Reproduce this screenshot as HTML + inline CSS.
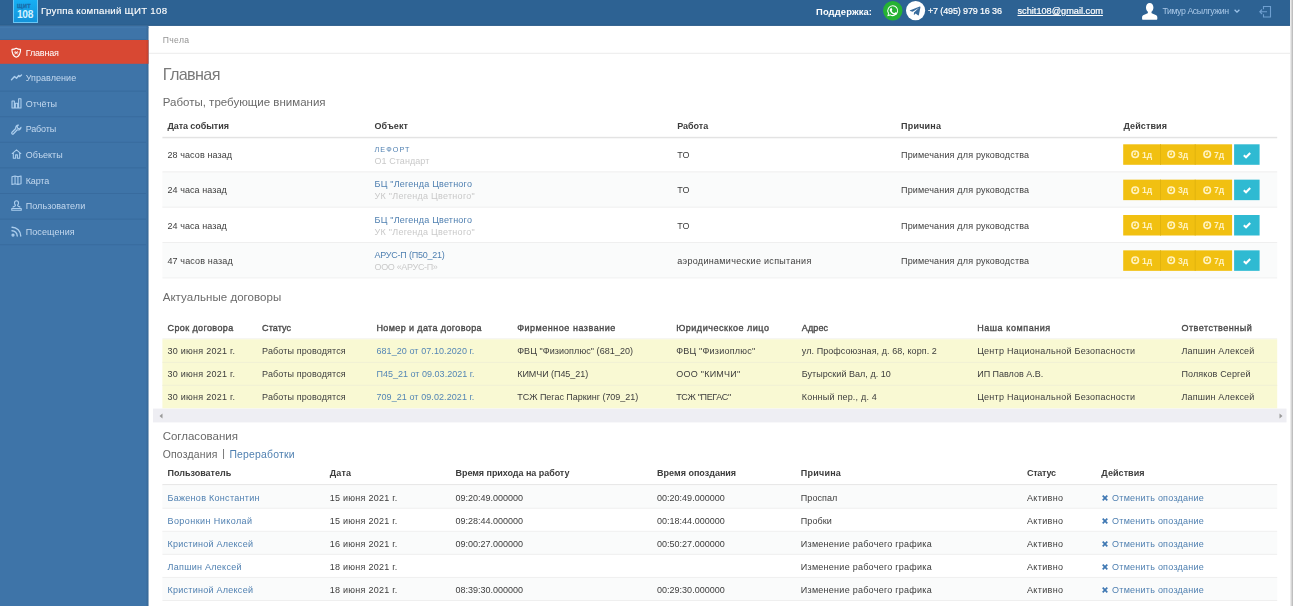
<!DOCTYPE html>
<html lang="ru">
<head>
<meta charset="utf-8">
<title>Главная</title>
<style>
*{box-sizing:border-box;margin:0;padding:0}
html,body{width:1293px;height:606px;overflow:hidden;background:#fff}
body{font-family:"Liberation Sans",sans-serif;font-size:9px;color:#3d3d3d;position:relative}
#frame{position:absolute;left:0;top:0;width:1290px;height:606px;overflow:hidden;background:#fff}
#edge{position:absolute;left:1290px;top:0;width:3px;height:606px;background:linear-gradient(90deg,#f4f4f4 0,#d6d6d6 50%,#b4b4b4 100%)}
.t{position:absolute;white-space:pre}
#tx{position:absolute;left:0;top:0;width:1290px;height:606px;will-change:transform}
.b{position:absolute}
svg{position:absolute;overflow:visible}
</style>
</head>
<body>
<div id="frame">
<svg style="left:0;top:0" width="1290" height="606" viewBox="0 0 1290 606">
<rect x="0.00" y="0.00" width="1290.00" height="25.75" fill="#2d6293"/>
<rect x="0.00" y="24.75" width="1290.00" height="1.00" fill="#2b5b89"/>
<rect x="0.00" y="25.75" width="148.50" height="581.00" fill="#3e74a8"/>
<rect x="0.00" y="27.20" width="148.50" height="1.00" fill="#457bad"/>
<rect x="0.00" y="40.00" width="148.50" height="23.80" fill="#d84833"/>
<defs><linearGradient id="sg" x1="0" x2="1" y1="0" y2="0"><stop offset="0" stop-color="#000" stop-opacity="0"/><stop offset="1" stop-color="#000" stop-opacity=".11"/></linearGradient></defs>
<rect x="145.50" y="25.75" width="3.00" height="581.00" fill="url(#sg)"/>
<rect x="0.00" y="90.60" width="146.00" height="1.00" fill="#386b9e"/>
<rect x="0.00" y="116.20" width="146.00" height="1.00" fill="#386b9e"/>
<rect x="0.00" y="141.80" width="146.00" height="1.00" fill="#386b9e"/>
<rect x="0.00" y="167.40" width="146.00" height="1.00" fill="#386b9e"/>
<rect x="0.00" y="193.00" width="146.00" height="1.00" fill="#386b9e"/>
<rect x="0.00" y="218.60" width="146.00" height="1.00" fill="#386b9e"/>
<rect x="0.00" y="244.20" width="146.00" height="1.00" fill="#386b9e"/>
<rect x="0.00" y="39.00" width="146.00" height="1.00" fill="#386b9e"/>
<rect x="149.00" y="52.80" width="1141.00" height="1.00" fill="#ebebeb"/>
<rect x="162.40" y="136.80" width="1114.80" height="1.50" fill="#e3e3e3"/>
<rect x="1123.20" y="144.30" width="108.90" height="20.50" fill="#f1c011"/>
<rect x="1160.00" y="144.30" width="1.00" height="20.50" fill="#e2b40e"/>
<rect x="1194.70" y="144.30" width="1.00" height="20.50" fill="#e2b40e"/>
<rect x="1234.10" y="144.30" width="25.50" height="20.50" fill="#2fbad2"/>
<rect x="162.40" y="171.85" width="1114.80" height="35.35" fill="#fafbfb"/>
<rect x="162.40" y="171.35" width="1114.80" height="1.00" fill="#efefef"/>
<rect x="1123.20" y="179.65" width="108.90" height="20.50" fill="#f1c011"/>
<rect x="1160.00" y="179.65" width="1.00" height="20.50" fill="#e2b40e"/>
<rect x="1194.70" y="179.65" width="1.00" height="20.50" fill="#e2b40e"/>
<rect x="1234.10" y="179.65" width="25.50" height="20.50" fill="#2fbad2"/>
<rect x="162.40" y="206.70" width="1114.80" height="1.00" fill="#efefef"/>
<rect x="1123.20" y="215.00" width="108.90" height="20.50" fill="#f1c011"/>
<rect x="1160.00" y="215.00" width="1.00" height="20.50" fill="#e2b40e"/>
<rect x="1194.70" y="215.00" width="1.00" height="20.50" fill="#e2b40e"/>
<rect x="1234.10" y="215.00" width="25.50" height="20.50" fill="#2fbad2"/>
<rect x="162.40" y="242.55" width="1114.80" height="35.35" fill="#fafbfb"/>
<rect x="162.40" y="242.05" width="1114.80" height="1.00" fill="#efefef"/>
<rect x="1123.20" y="250.35" width="108.90" height="20.50" fill="#f1c011"/>
<rect x="1160.00" y="250.35" width="1.00" height="20.50" fill="#e2b40e"/>
<rect x="1194.70" y="250.35" width="1.00" height="20.50" fill="#e2b40e"/>
<rect x="1234.10" y="250.35" width="25.50" height="20.50" fill="#2fbad2"/>
<rect x="162.40" y="277.40" width="1114.80" height="1.00" fill="#f1f1f1"/>
<rect x="162.40" y="338.40" width="1114.80" height="1.00" fill="#f0f0ea"/>
<rect x="162.40" y="339.30" width="1114.80" height="69.10" fill="#f9f9d3"/>
<rect x="162.40" y="361.83" width="1114.80" height="1.00" fill="#f0f0d4"/>
<rect x="162.40" y="384.86" width="1114.80" height="1.00" fill="#f0f0d4"/>
<rect x="153.00" y="408.60" width="1133.50" height="13.80" fill="#eeeef3"/>
<rect x="162.40" y="484.20" width="1114.80" height="1.30" fill="#e3e3e3"/>
<rect x="162.40" y="485.20" width="1114.80" height="23.05" fill="#fafbfb"/>
<rect x="162.40" y="507.75" width="1114.80" height="1.00" fill="#efefef"/>
<rect x="162.40" y="531.30" width="1114.80" height="23.05" fill="#fafbfb"/>
<rect x="162.40" y="530.80" width="1114.80" height="1.00" fill="#efefef"/>
<rect x="162.40" y="553.85" width="1114.80" height="1.00" fill="#efefef"/>
<rect x="162.40" y="577.40" width="1114.80" height="23.05" fill="#fafbfb"/>
<rect x="162.40" y="576.90" width="1114.80" height="1.00" fill="#efefef"/>
<rect x="162.40" y="599.95" width="1114.80" height="1.00" fill="#efefef"/>
</svg>
<div class="b" style="left:13px;top:0;width:25px;height:22.600px;background:linear-gradient(#17aff4,#1393da);border:1px solid #6ac5f4;border-top:0"></div>
<span class="t" style="left:17px;top:3.100px;font-size:5.400px;line-height:6px;font-weight:700;color:#1a6fad;letter-spacing:0.500px;-webkit-text-stroke:0.350px #1a6fad">ЩИТ</span>
<span class="t" style="left:17px;top:8.500px;font-size:10.200px;line-height:12px;font-weight:700;color:#d4f2ff;letter-spacing:-0.350px">108</span>
<svg style="left:883.4px;top:1.1px" width="19.5" height="19.5" viewBox="0 0 24 24"><circle cx="12" cy="12" r="12" fill="#25b234"/><path fill="#fff" d="M12 5.2a6.7 6.7 0 0 0-5.8 10.1L5.3 18.8l3.6-.9A6.7 6.7 0 1 0 12 5.200zm0 1.300a5.400 5.400 0 1 1-2.800 10l-.3-.2-2 .5.500-1.900-.2-.3A5.400 5.400 0 0 1 12 6.500zm-2.300 2.400c-.2 0-.4 0-.6.300-.3.300-.8.800-.8 1.800s.8 2.100.9 2.200c.1.200 1.600 2.500 3.900 3.400 1.900.700 2.300.600 2.700.500.400 0 1.300-.5 1.500-1.100.2-.5.2-1 .1-1.100 0-.1-.2-.2-.5-.3l-1.500-.7c-.2-.1-.4-.1-.500.100l-.7.900c-.1.100-.3.200-.5 0-.8-.4-1.500-.8-2.100-1.500-.500-.5-.8-1.100-.9-1.300-.1-.2 0-.4.100-.5l.4-.4.200-.4v-.4l-.7-1.600c-.2-.4-.3-.4-.5-.4z"/></svg>
<svg style="left:905.8px;top:1.1px" width="19.2" height="19.2" viewBox="0 0 24 24"><circle cx="12" cy="12" r="12" fill="#fff"/><path fill="#3a6d9e" d="M5.300 11.700 17.200 7c.6-.2 1 .1.900.9l-2 9.500c-.1.700-.6.800-1.100.500l-3.100-2.300-1.500 1.500c-.2.200-.3.300-.6.300l.2-3.100 5.700-5.200c.3-.2 0-.3-.3-.1l-7.100 4.400-3-1c-.7-.2-.7-.6 0-.7z"/></svg>
<svg style="left:1142px;top:2.500px" width="15.400" height="16.700" viewBox="0 0 16 17.500"><path fill="#fff" d="M8 0c2.300 0 3.900 2 3.900 4.600 0 1.900-.8 3.700-2 4.600v.9c0 .5.300.8.800 1l3.600 1.400c1 .4 1.700 1.300 1.700 2.400v1.500c0 .6-.4 1.100-1 1.100H1c-.6 0-1-.5-1-1.100v-1.500c0-1.100.7-2 1.700-2.400l3.600-1.400c.5-.2.800-.5.800-1v-.9c-1.200-.9-2-2.700-2-4.600C4.100 2 5.700 0 8 0z"/></svg>
<svg style="left:1234px;top:9.300px" width="6" height="4" viewBox="0 0 6 4"><path d="M.6.700 3 3.100 5.400.7" stroke="#9cc3ea" stroke-width="1.300" fill="none"/></svg>
<svg style="left:1258.500px;top:5.500px" width="12" height="11.500" viewBox="0 0 12 11.500"><path d="M4.500 3.200V.5H11.500V11H4.500V8.300M8 5.750H.8M3 3.500.8 5.750 3 8" stroke="#6f9fd0" stroke-width="1.100" fill="none"/></svg>
<svg style="left:11.0px;top:46.5px" width="10.5" height="11.5" viewBox="0 0 22 22" fill="none" stroke="#fff" stroke-width="2.500" stroke-linecap="round" stroke-linejoin="round"><path d="M11 1.500C8 3.500 5 4 2 4c0 8 2 13.500 9 16.500C18 17.500 20 12 20 4c-3 0-6-.5-9-2.500z" stroke-width="2.400"/><path d="M8.500 8l5 6M13.500 8l-5 6M7.500 11h7" stroke-width="1.600"/></svg>
<svg style="left:11.0px;top:72.3px" width="11" height="11" viewBox="0 0 22 22" fill="none" stroke="#acceee" stroke-width="2.500" stroke-linecap="round" stroke-linejoin="round"><path d="M1 15.500 7 9l4 3.500L15.500 7l2 2L21 6" stroke-width="2.800"/></svg>
<svg style="left:11.0px;top:97.8px" width="11" height="10.4" viewBox="0 0 22 22" fill="none" stroke="#acceee" stroke-width="2.500" stroke-linecap="round" stroke-linejoin="round"><path d="M1.500 21V6.500h5V21zM8.500 21V11h5v10zM15.500 21V1.500h5V21z" stroke-width="2.300"/></svg>
<svg style="left:11.0px;top:123.5px" width="11" height="11" viewBox="0 0 22 22" fill="none" stroke="#acceee" stroke-width="2.500" stroke-linecap="round" stroke-linejoin="round"><path d="M20 6.500a5.500 5.500 0 0 1-7.500 5L5 19.500a2 2 0 0 1-3-3L9.500 9A5.500 5.500 0 0 1 15 2l-3 3.500L13.500 8.500 17 10l3-3.500z" stroke-width="2.300"/></svg>
<svg style="left:11.0px;top:149.3px" width="11" height="10" viewBox="0 0 22 22" fill="none" stroke="#acceee" stroke-width="2.500" stroke-linecap="round" stroke-linejoin="round"><path d="M1.500 10 11 2l9.500 8M4 8.500V20.500h5V13h4v7.500h5V8.500" stroke-width="2.400"/></svg>
<svg style="left:11.0px;top:174.9px" width="11" height="10.5" viewBox="0 0 22 22" fill="none" stroke="#acceee" stroke-width="2.500" stroke-linecap="round" stroke-linejoin="round"><path d="M1.500 3.500 8 2l6 1.500L20.500 2V18.500L14 20l-6-1.500-6.500 1.500zM8 2V18.500M14 3.500V20" stroke-width="2.300"/></svg>
<svg style="left:11.0px;top:200.3px" width="11" height="11" viewBox="0 0 22 22" fill="none" stroke="#acceee" stroke-width="2.500" stroke-linecap="round" stroke-linejoin="round"><path d="M11 1.500c2.500 0 4 2 4 4.500 0 2-1 3.500-2 4.500 0 2 2 2.500 5 3.500M11 1.500c-2.500 0-4 2-4 4.500 0 2 1 3.500 2 4.500 0 2-2 2.500-5 3.500M1.500 17h19v3.500h-19z" stroke-width="2.200"/></svg>
<svg style="left:11.0px;top:225.9px" width="11" height="11" viewBox="0 0 22 22" fill="none" stroke="#acceee" stroke-width="2.500" stroke-linecap="round" stroke-linejoin="round"><circle cx="4" cy="18" r="2"/><path d="M2 9.500A10.500 10.500 0 0 1 12.500 20M2 2.500A17.500 17.500 0 0 1 19.500 20" stroke-width="2.700"/></svg>
<svg style="left:1131.3px;top:150.4px" width="8.400" height="8.400" viewBox="0 0 10 10" fill="none" stroke="#fff2bf" stroke-width="1.900"><circle cx="5" cy="5" r="3.900"/><path d="M5 2.600V5.300H3.400" stroke-width="1.400"/></svg>
<svg style="left:1167.3px;top:150.4px" width="8.400" height="8.400" viewBox="0 0 10 10" fill="none" stroke="#fff2bf" stroke-width="1.900"><circle cx="5" cy="5" r="3.900"/><path d="M5 2.600V5.300H3.400" stroke-width="1.400"/></svg>
<svg style="left:1203.3px;top:150.4px" width="8.400" height="8.400" viewBox="0 0 10 10" fill="none" stroke="#fff2bf" stroke-width="1.900"><circle cx="5" cy="5" r="3.900"/><path d="M5 2.600V5.300H3.400" stroke-width="1.400"/></svg>
<svg style="left:1242.900px;top:151.8px" width="8" height="6.400" viewBox="0 0 9 7" fill="none" stroke="#fff" stroke-width="2.300"><path d="M.9 3.600 3.400 5.800 8.100 1"/></svg>
<svg style="left:1131.3px;top:185.7px" width="8.400" height="8.400" viewBox="0 0 10 10" fill="none" stroke="#fff2bf" stroke-width="1.900"><circle cx="5" cy="5" r="3.900"/><path d="M5 2.600V5.300H3.400" stroke-width="1.400"/></svg>
<svg style="left:1167.3px;top:185.7px" width="8.400" height="8.400" viewBox="0 0 10 10" fill="none" stroke="#fff2bf" stroke-width="1.900"><circle cx="5" cy="5" r="3.900"/><path d="M5 2.600V5.300H3.400" stroke-width="1.400"/></svg>
<svg style="left:1203.3px;top:185.7px" width="8.400" height="8.400" viewBox="0 0 10 10" fill="none" stroke="#fff2bf" stroke-width="1.900"><circle cx="5" cy="5" r="3.900"/><path d="M5 2.600V5.300H3.400" stroke-width="1.400"/></svg>
<svg style="left:1242.900px;top:187.1px" width="8" height="6.400" viewBox="0 0 9 7" fill="none" stroke="#fff" stroke-width="2.300"><path d="M.9 3.600 3.400 5.800 8.100 1"/></svg>
<svg style="left:1131.3px;top:221.1px" width="8.400" height="8.400" viewBox="0 0 10 10" fill="none" stroke="#fff2bf" stroke-width="1.900"><circle cx="5" cy="5" r="3.900"/><path d="M5 2.600V5.300H3.400" stroke-width="1.400"/></svg>
<svg style="left:1167.3px;top:221.1px" width="8.400" height="8.400" viewBox="0 0 10 10" fill="none" stroke="#fff2bf" stroke-width="1.900"><circle cx="5" cy="5" r="3.900"/><path d="M5 2.600V5.300H3.400" stroke-width="1.400"/></svg>
<svg style="left:1203.3px;top:221.1px" width="8.400" height="8.400" viewBox="0 0 10 10" fill="none" stroke="#fff2bf" stroke-width="1.900"><circle cx="5" cy="5" r="3.900"/><path d="M5 2.600V5.300H3.400" stroke-width="1.400"/></svg>
<svg style="left:1242.900px;top:222.4px" width="8" height="6.400" viewBox="0 0 9 7" fill="none" stroke="#fff" stroke-width="2.300"><path d="M.9 3.600 3.400 5.800 8.100 1"/></svg>
<svg style="left:1131.3px;top:256.4px" width="8.400" height="8.400" viewBox="0 0 10 10" fill="none" stroke="#fff2bf" stroke-width="1.900"><circle cx="5" cy="5" r="3.900"/><path d="M5 2.600V5.300H3.400" stroke-width="1.400"/></svg>
<svg style="left:1167.3px;top:256.4px" width="8.400" height="8.400" viewBox="0 0 10 10" fill="none" stroke="#fff2bf" stroke-width="1.900"><circle cx="5" cy="5" r="3.900"/><path d="M5 2.600V5.300H3.400" stroke-width="1.400"/></svg>
<svg style="left:1203.3px;top:256.4px" width="8.400" height="8.400" viewBox="0 0 10 10" fill="none" stroke="#fff2bf" stroke-width="1.900"><circle cx="5" cy="5" r="3.900"/><path d="M5 2.600V5.300H3.400" stroke-width="1.400"/></svg>
<svg style="left:1242.900px;top:257.8px" width="8" height="6.400" viewBox="0 0 9 7" fill="none" stroke="#fff" stroke-width="2.300"><path d="M.9 3.600 3.400 5.800 8.100 1"/></svg>
<svg style="left:158.500px;top:412.500px" width="4" height="6" viewBox="0 0 4 6"><path d="M3.500.5v5L.5 3z" fill="#9a9a9a"/></svg>
<svg style="left:1278.500px;top:412.500px" width="4" height="6" viewBox="0 0 4 6"><path d="M.5.500v5L3.500 3z" fill="#9a9a9a"/></svg>
<svg style="left:1101.600px;top:495.0px" width="6" height="6" viewBox="0 0 6 6" stroke="#3f78b3" stroke-width="1.700" fill="none"><path d="M.7.700 5.300 5.300M5.300.700.7 5.300"/></svg>
<svg style="left:1101.600px;top:518.1px" width="6" height="6" viewBox="0 0 6 6" stroke="#3f78b3" stroke-width="1.700" fill="none"><path d="M.7.700 5.300 5.300M5.300.700.7 5.300"/></svg>
<svg style="left:1101.600px;top:541.1px" width="6" height="6" viewBox="0 0 6 6" stroke="#3f78b3" stroke-width="1.700" fill="none"><path d="M.7.700 5.300 5.300M5.300.700.7 5.300"/></svg>
<svg style="left:1101.600px;top:564.2px" width="6" height="6" viewBox="0 0 6 6" stroke="#3f78b3" stroke-width="1.700" fill="none"><path d="M.7.700 5.300 5.300M5.300.700.7 5.300"/></svg>
<svg style="left:1101.600px;top:587.2px" width="6" height="6" viewBox="0 0 6 6" stroke="#3f78b3" stroke-width="1.700" fill="none"><path d="M.7.700 5.300 5.300M5.300.700.7 5.300"/></svg>
<div id="tx">
<span class="t" style="left:41.0px;top:4.0px;font-size:9.7px;line-height:13.6px;color:#fff;letter-spacing:0.27px;-webkit-text-stroke:0.12px #fff;">Группа компаний ЩИТ 108</span>
<span class="t" style="left:816.0px;top:4.6px;font-size:9.4px;line-height:13.2px;color:#fff;font-weight:700;letter-spacing:0.14px;">Поддержка:</span>
<span class="t" style="left:928.0px;top:5.1px;font-size:9px;line-height:12.6px;color:#fff;letter-spacing:-0.14px;-webkit-text-stroke:0.2px #fff;">+7 (495) 979 16 36</span>
<span class="t" style="left:1017.5px;top:5.0px;font-size:9.2px;line-height:12.9px;color:#fff;text-decoration:underline;-webkit-text-stroke:0.2px #fff;">schit108@gmail.com</span>
<span class="t" style="left:1162.4px;top:5.3px;font-size:8.8px;line-height:12.3px;color:#a9c8e8;letter-spacing:-0.44px;">Тимур Асылгужин</span>
<span class="t" style="left:25.7px;top:46.5px;font-size:9px;line-height:12.6px;color:#fff;letter-spacing:-0.16px;">Главная</span>
<span class="t" style="left:25.7px;top:72.1px;font-size:9px;line-height:12.6px;color:#c4d9ef;letter-spacing:0.05px;">Управление</span>
<span class="t" style="left:25.7px;top:97.7px;font-size:9px;line-height:12.6px;color:#c4d9ef;letter-spacing:-0.02px;">Отчёты</span>
<span class="t" style="left:25.7px;top:123.3px;font-size:9px;line-height:12.6px;color:#c4d9ef;letter-spacing:-0.15px;">Работы</span>
<span class="t" style="left:25.7px;top:148.9px;font-size:9px;line-height:12.6px;color:#c4d9ef;letter-spacing:-0.02px;">Объекты</span>
<span class="t" style="left:25.7px;top:174.5px;font-size:9px;line-height:12.6px;color:#c4d9ef;letter-spacing:-0.15px;">Карта</span>
<span class="t" style="left:25.7px;top:200.1px;font-size:9px;line-height:12.6px;color:#c4d9ef;letter-spacing:0.07px;">Пользователи</span>
<span class="t" style="left:25.7px;top:225.7px;font-size:9px;line-height:12.6px;color:#c4d9ef;letter-spacing:0.10px;">Посещения</span>
<span class="t" style="left:162.7px;top:34.4px;font-size:8.6px;line-height:12.0px;color:#939393;letter-spacing:0.36px;">Пчела</span>
<span class="t" style="left:162.7px;top:63.2px;font-size:16.2px;line-height:22.7px;color:#7a7a7a;letter-spacing:-0.65px;">Главная</span>
<span class="t" style="left:162.7px;top:93.8px;font-size:11.5px;line-height:16.1px;color:#6a6a6a;letter-spacing:0.01px;">Работы, требующие внимания</span>
<span class="t" style="left:162.7px;top:289.3px;font-size:11.5px;line-height:16.1px;color:#6a6a6a;letter-spacing:0.05px;">Актуальные договоры</span>
<span class="t" style="left:162.7px;top:427.9px;font-size:11.5px;line-height:16.1px;color:#6a6a6a;letter-spacing:-0.02px;">Согласования</span>
<span class="t" style="left:162.7px;top:447.7px;font-size:10.4px;line-height:14.6px;color:#666;letter-spacing:0.21px;">Опоздания</span>
<span class="t" style="left:222.3px;top:447.1px;font-size:10.4px;line-height:14.6px;color:#666;">|</span>
<span class="t" style="left:229.4px;top:447.7px;font-size:10.4px;line-height:14.6px;color:#5080b1;letter-spacing:0.22px;">Переработки</span>
<span class="t" style="left:167.4px;top:120.2px;font-size:9px;line-height:12.6px;color:#3c3c3c;font-weight:700;letter-spacing:-0.07px;">Дата события</span>
<span class="t" style="left:374.5px;top:120.2px;font-size:9px;line-height:12.6px;color:#3c3c3c;font-weight:700;letter-spacing:0.10px;">Объект</span>
<span class="t" style="left:677.2px;top:120.2px;font-size:9px;line-height:12.6px;color:#3c3c3c;font-weight:700;letter-spacing:-0.03px;">Работа</span>
<span class="t" style="left:901.0px;top:120.2px;font-size:9px;line-height:12.6px;color:#3c3c3c;font-weight:700;letter-spacing:0.22px;">Причина</span>
<span class="t" style="left:1123.5px;top:120.2px;font-size:9px;line-height:12.6px;color:#3c3c3c;font-weight:700;letter-spacing:0.10px;">Действия</span>
<span class="t" style="left:167.4px;top:148.9px;font-size:9px;line-height:12.6px;color:#3d3d3d;letter-spacing:0.10px;">28 часов назад</span>
<span class="t" style="left:374.5px;top:144.5px;font-size:7.2px;line-height:10.1px;color:#5080b1;letter-spacing:1.11px;">ЛЕФОРТ</span>
<span class="t" style="left:374.5px;top:155.1px;font-size:9px;line-height:12.6px;color:#c9c9c9;letter-spacing:0.06px;">О1 Стандарт</span>
<span class="t" style="left:677.2px;top:148.9px;font-size:9px;line-height:12.6px;color:#3d3d3d;letter-spacing:0.21px;">ТО</span>
<span class="t" style="left:901.0px;top:148.9px;font-size:9px;line-height:12.6px;color:#3d3d3d;letter-spacing:0.17px;">Примечания для руководства</span>
<span class="t" style="left:1142.0px;top:148.8px;font-size:8.6px;line-height:12.0px;color:#fff2bf;font-weight:700;letter-spacing:-0.05px;">1д</span>
<span class="t" style="left:1178.0px;top:148.8px;font-size:8.6px;line-height:12.0px;color:#fff2bf;font-weight:700;letter-spacing:-0.05px;">3д</span>
<span class="t" style="left:1214.0px;top:148.8px;font-size:8.6px;line-height:12.0px;color:#fff2bf;font-weight:700;letter-spacing:-0.05px;">7д</span>
<span class="t" style="left:167.4px;top:184.3px;font-size:9px;line-height:12.6px;color:#3d3d3d;letter-spacing:0.08px;">24 часа назад</span>
<span class="t" style="left:374.5px;top:178.3px;font-size:9px;line-height:12.6px;color:#5080b1;letter-spacing:0.22px;">БЦ "Легенда Цветного</span>
<span class="t" style="left:374.5px;top:190.4px;font-size:9px;line-height:12.6px;color:#c9c9c9;letter-spacing:0.27px;">УК "Легенда Цветного"</span>
<span class="t" style="left:677.2px;top:184.3px;font-size:9px;line-height:12.6px;color:#3d3d3d;letter-spacing:0.21px;">ТО</span>
<span class="t" style="left:901.0px;top:184.3px;font-size:9px;line-height:12.6px;color:#3d3d3d;letter-spacing:0.17px;">Примечания для руководства</span>
<span class="t" style="left:1142.0px;top:184.1px;font-size:8.6px;line-height:12.0px;color:#fff2bf;font-weight:700;letter-spacing:-0.05px;">1д</span>
<span class="t" style="left:1178.0px;top:184.1px;font-size:8.6px;line-height:12.0px;color:#fff2bf;font-weight:700;letter-spacing:-0.05px;">3д</span>
<span class="t" style="left:1214.0px;top:184.1px;font-size:8.6px;line-height:12.0px;color:#fff2bf;font-weight:700;letter-spacing:-0.05px;">7д</span>
<span class="t" style="left:167.4px;top:219.7px;font-size:9px;line-height:12.6px;color:#3d3d3d;letter-spacing:0.08px;">24 часа назад</span>
<span class="t" style="left:374.5px;top:213.7px;font-size:9px;line-height:12.6px;color:#5080b1;letter-spacing:0.22px;">БЦ "Легенда Цветного</span>
<span class="t" style="left:374.5px;top:225.8px;font-size:9px;line-height:12.6px;color:#c9c9c9;letter-spacing:0.27px;">УК "Легенда Цветного"</span>
<span class="t" style="left:677.2px;top:219.7px;font-size:9px;line-height:12.6px;color:#3d3d3d;letter-spacing:0.21px;">ТО</span>
<span class="t" style="left:901.0px;top:219.7px;font-size:9px;line-height:12.6px;color:#3d3d3d;letter-spacing:0.17px;">Примечания для руководства</span>
<span class="t" style="left:1142.0px;top:219.4px;font-size:8.6px;line-height:12.0px;color:#fff2bf;font-weight:700;letter-spacing:-0.05px;">1д</span>
<span class="t" style="left:1178.0px;top:219.4px;font-size:8.6px;line-height:12.0px;color:#fff2bf;font-weight:700;letter-spacing:-0.05px;">3д</span>
<span class="t" style="left:1214.0px;top:219.4px;font-size:8.6px;line-height:12.0px;color:#fff2bf;font-weight:700;letter-spacing:-0.05px;">7д</span>
<span class="t" style="left:167.4px;top:255.1px;font-size:9px;line-height:12.6px;color:#3d3d3d;letter-spacing:0.15px;">47 часов назад</span>
<span class="t" style="left:374.5px;top:249.1px;font-size:9px;line-height:12.6px;color:#5080b1;letter-spacing:-0.23px;">АРУС-П (П50_21)</span>
<span class="t" style="left:374.5px;top:261.2px;font-size:9px;line-height:12.6px;color:#c9c9c9;letter-spacing:-0.33px;">ООО «АРУС-П»</span>
<span class="t" style="left:677.2px;top:255.1px;font-size:9px;line-height:12.6px;color:#3d3d3d;letter-spacing:0.31px;">аэродинамические испытания</span>
<span class="t" style="left:901.0px;top:255.1px;font-size:9px;line-height:12.6px;color:#3d3d3d;letter-spacing:0.17px;">Примечания для руководства</span>
<span class="t" style="left:1142.0px;top:254.8px;font-size:8.6px;line-height:12.0px;color:#fff2bf;font-weight:700;letter-spacing:-0.05px;">1д</span>
<span class="t" style="left:1178.0px;top:254.8px;font-size:8.6px;line-height:12.0px;color:#fff2bf;font-weight:700;letter-spacing:-0.05px;">3д</span>
<span class="t" style="left:1214.0px;top:254.8px;font-size:8.6px;line-height:12.0px;color:#fff2bf;font-weight:700;letter-spacing:-0.05px;">7д</span>
<span class="t" style="left:167.5px;top:321.5px;font-size:9px;line-height:12.6px;color:#4a4a4a;letter-spacing:0.39px;-webkit-text-stroke:0.35px #4a4a4a;">Срок договора</span>
<span class="t" style="left:262.1px;top:321.5px;font-size:9px;line-height:12.6px;color:#4a4a4a;letter-spacing:0.11px;-webkit-text-stroke:0.35px #4a4a4a;">Статус</span>
<span class="t" style="left:376.4px;top:321.5px;font-size:9px;line-height:12.6px;color:#4a4a4a;letter-spacing:0.39px;-webkit-text-stroke:0.35px #4a4a4a;">Номер и дата договора</span>
<span class="t" style="left:517.2px;top:321.5px;font-size:9px;line-height:12.6px;color:#4a4a4a;letter-spacing:0.52px;-webkit-text-stroke:0.35px #4a4a4a;">Фирменное название</span>
<span class="t" style="left:676.2px;top:321.5px;font-size:9px;line-height:12.6px;color:#4a4a4a;letter-spacing:0.52px;-webkit-text-stroke:0.35px #4a4a4a;">Юридическкое лицо</span>
<span class="t" style="left:801.8px;top:321.5px;font-size:9px;line-height:12.6px;color:#4a4a4a;letter-spacing:0.11px;-webkit-text-stroke:0.35px #4a4a4a;">Адрес</span>
<span class="t" style="left:977.2px;top:321.5px;font-size:9px;line-height:12.6px;color:#4a4a4a;letter-spacing:0.57px;-webkit-text-stroke:0.35px #4a4a4a;">Наша компания</span>
<span class="t" style="left:1181.4px;top:321.5px;font-size:9px;line-height:12.6px;color:#4a4a4a;letter-spacing:0.51px;-webkit-text-stroke:0.35px #4a4a4a;">Ответственный</span>
<span class="t" style="left:167.5px;top:345.3px;font-size:9px;line-height:12.6px;color:#3d3d3d;letter-spacing:0.26px;">30 июня 2021 г.</span>
<span class="t" style="left:262.1px;top:345.3px;font-size:9px;line-height:12.6px;color:#3d3d3d;letter-spacing:0.12px;">Работы проводятся</span>
<span class="t" style="left:376.4px;top:345.3px;font-size:9px;line-height:12.6px;color:#5486b5;letter-spacing:0.08px;">681_20 от 07.10.2020 г.</span>
<span class="t" style="left:517.2px;top:345.3px;font-size:9px;line-height:12.6px;color:#3d3d3d;letter-spacing:0.07px;">ФВЦ "Физиоплюс" (681_20)</span>
<span class="t" style="left:676.2px;top:345.3px;font-size:9px;line-height:12.6px;color:#3d3d3d;letter-spacing:0.23px;">ФВЦ "Физиоплюс"</span>
<span class="t" style="left:801.8px;top:345.3px;font-size:9px;line-height:12.6px;color:#3d3d3d;letter-spacing:0.07px;">ул. Профсоюзная, д. 68, корп. 2</span>
<span class="t" style="left:977.2px;top:345.3px;font-size:9px;line-height:12.6px;color:#3d3d3d;letter-spacing:0.26px;">Центр Национальной Безопасности</span>
<span class="t" style="left:1181.4px;top:345.3px;font-size:9px;line-height:12.6px;color:#3d3d3d;letter-spacing:0.20px;">Лапшин Алексей</span>
<span class="t" style="left:167.5px;top:368.3px;font-size:9px;line-height:12.6px;color:#3d3d3d;letter-spacing:0.26px;">30 июня 2021 г.</span>
<span class="t" style="left:262.1px;top:368.3px;font-size:9px;line-height:12.6px;color:#3d3d3d;letter-spacing:0.12px;">Работы проводятся</span>
<span class="t" style="left:376.4px;top:368.3px;font-size:9px;line-height:12.6px;color:#5486b5;letter-spacing:0.02px;">П45_21 от 09.03.2021 г.</span>
<span class="t" style="left:517.2px;top:368.3px;font-size:9px;line-height:12.6px;color:#3d3d3d;letter-spacing:-0.04px;">КИМЧИ (П45_21)</span>
<span class="t" style="left:676.2px;top:368.3px;font-size:9px;line-height:12.6px;color:#3d3d3d;letter-spacing:0.25px;">ООО "КИМЧИ"</span>
<span class="t" style="left:801.8px;top:368.3px;font-size:9px;line-height:12.6px;color:#3d3d3d;letter-spacing:0.04px;">Бутырский Вал, д. 10</span>
<span class="t" style="left:977.2px;top:368.3px;font-size:9px;line-height:12.6px;color:#3d3d3d;letter-spacing:-0.01px;">ИП Павлов А.В.</span>
<span class="t" style="left:1181.4px;top:368.3px;font-size:9px;line-height:12.6px;color:#3d3d3d;letter-spacing:0.13px;">Поляков Сергей</span>
<span class="t" style="left:167.5px;top:391.4px;font-size:9px;line-height:12.6px;color:#3d3d3d;letter-spacing:0.26px;">30 июня 2021 г.</span>
<span class="t" style="left:262.1px;top:391.4px;font-size:9px;line-height:12.6px;color:#3d3d3d;letter-spacing:0.12px;">Работы проводятся</span>
<span class="t" style="left:376.4px;top:391.4px;font-size:9px;line-height:12.6px;color:#5486b5;letter-spacing:0.08px;">709_21 от 09.02.2021 г.</span>
<span class="t" style="left:517.2px;top:391.4px;font-size:9px;line-height:12.6px;color:#3d3d3d;letter-spacing:-0.02px;">ТСЖ Пегас Паркинг (709_21)</span>
<span class="t" style="left:676.2px;top:391.4px;font-size:9px;line-height:12.6px;color:#3d3d3d;letter-spacing:-0.33px;">ТСЖ "ПЕГАС"</span>
<span class="t" style="left:801.8px;top:391.4px;font-size:9px;line-height:12.6px;color:#3d3d3d;letter-spacing:0.20px;">Конный пер., д. 4</span>
<span class="t" style="left:977.2px;top:391.4px;font-size:9px;line-height:12.6px;color:#3d3d3d;letter-spacing:0.26px;">Центр Национальной Безопасности</span>
<span class="t" style="left:1181.4px;top:391.4px;font-size:9px;line-height:12.6px;color:#3d3d3d;letter-spacing:0.20px;">Лапшин Алексей</span>
<span class="t" style="left:167.5px;top:467.3px;font-size:9px;line-height:12.6px;color:#3c3c3c;font-weight:700;letter-spacing:-0.01px;">Пользователь</span>
<span class="t" style="left:329.7px;top:467.3px;font-size:9px;line-height:12.6px;color:#3c3c3c;font-weight:700;letter-spacing:0.15px;">Дата</span>
<span class="t" style="left:455.5px;top:467.3px;font-size:9px;line-height:12.6px;color:#3c3c3c;font-weight:700;letter-spacing:-0.05px;">Время прихода на работу</span>
<span class="t" style="left:657.1px;top:467.3px;font-size:9px;line-height:12.6px;color:#3c3c3c;font-weight:700;">Время опоздания</span>
<span class="t" style="left:800.8px;top:467.3px;font-size:9px;line-height:12.6px;color:#3c3c3c;font-weight:700;letter-spacing:0.22px;">Причина</span>
<span class="t" style="left:1027.0px;top:467.3px;font-size:9px;line-height:12.6px;color:#3c3c3c;font-weight:700;letter-spacing:-0.27px;">Статус</span>
<span class="t" style="left:1101.3px;top:467.3px;font-size:9px;line-height:12.6px;color:#3c3c3c;font-weight:700;letter-spacing:0.07px;">Действия</span>
<span class="t" style="left:167.5px;top:491.5px;font-size:9px;line-height:12.6px;color:#5080b1;letter-spacing:0.29px;">Баженов Константин</span>
<span class="t" style="left:329.7px;top:491.5px;font-size:9px;line-height:12.6px;color:#3d3d3d;letter-spacing:0.27px;">15 июня 2021 г.</span>
<span class="t" style="left:455.5px;top:491.5px;font-size:9px;line-height:12.6px;color:#3d3d3d;">09:20:49.000000</span>
<span class="t" style="left:657.1px;top:491.5px;font-size:9px;line-height:12.6px;color:#3d3d3d;">00:20:49.000000</span>
<span class="t" style="left:800.8px;top:491.5px;font-size:9px;line-height:12.6px;color:#3d3d3d;letter-spacing:0.06px;">Проспал</span>
<span class="t" style="left:1027.0px;top:491.5px;font-size:9px;line-height:12.6px;color:#3d3d3d;letter-spacing:0.34px;">Активно</span>
<span class="t" style="left:1112.1px;top:491.5px;font-size:9px;line-height:12.6px;color:#5080b1;letter-spacing:0.24px;">Отменить опоздание</span>
<span class="t" style="left:167.5px;top:514.6px;font-size:9px;line-height:12.6px;color:#5080b1;letter-spacing:0.43px;">Воронкин Николай</span>
<span class="t" style="left:329.7px;top:514.6px;font-size:9px;line-height:12.6px;color:#3d3d3d;letter-spacing:0.27px;">15 июня 2021 г.</span>
<span class="t" style="left:455.5px;top:514.6px;font-size:9px;line-height:12.6px;color:#3d3d3d;">09:28:44.000000</span>
<span class="t" style="left:657.1px;top:514.6px;font-size:9px;line-height:12.6px;color:#3d3d3d;">00:18:44.000000</span>
<span class="t" style="left:800.8px;top:514.6px;font-size:9px;line-height:12.6px;color:#3d3d3d;letter-spacing:0.08px;">Пробки</span>
<span class="t" style="left:1027.0px;top:514.6px;font-size:9px;line-height:12.6px;color:#3d3d3d;letter-spacing:0.34px;">Активно</span>
<span class="t" style="left:1112.1px;top:514.6px;font-size:9px;line-height:12.6px;color:#5080b1;letter-spacing:0.24px;">Отменить опоздание</span>
<span class="t" style="left:167.5px;top:537.6px;font-size:9px;line-height:12.6px;color:#5080b1;letter-spacing:0.26px;">Кристиной Алексей</span>
<span class="t" style="left:329.7px;top:537.6px;font-size:9px;line-height:12.6px;color:#3d3d3d;letter-spacing:0.27px;">16 июня 2021 г.</span>
<span class="t" style="left:455.5px;top:537.6px;font-size:9px;line-height:12.6px;color:#3d3d3d;">09:00:27.000000</span>
<span class="t" style="left:657.1px;top:537.6px;font-size:9px;line-height:12.6px;color:#3d3d3d;">00:50:27.000000</span>
<span class="t" style="left:800.8px;top:537.6px;font-size:9px;line-height:12.6px;color:#3d3d3d;letter-spacing:0.26px;">Изменение рабочего графика</span>
<span class="t" style="left:1027.0px;top:537.6px;font-size:9px;line-height:12.6px;color:#3d3d3d;letter-spacing:0.34px;">Активно</span>
<span class="t" style="left:1112.1px;top:537.6px;font-size:9px;line-height:12.6px;color:#5080b1;letter-spacing:0.24px;">Отменить опоздание</span>
<span class="t" style="left:167.5px;top:560.7px;font-size:9px;line-height:12.6px;color:#5080b1;letter-spacing:0.28px;">Лапшин Алексей</span>
<span class="t" style="left:329.7px;top:560.7px;font-size:9px;line-height:12.6px;color:#3d3d3d;letter-spacing:0.27px;">18 июня 2021 г.</span>
<span class="t" style="left:800.8px;top:560.7px;font-size:9px;line-height:12.6px;color:#3d3d3d;letter-spacing:0.26px;">Изменение рабочего графика</span>
<span class="t" style="left:1027.0px;top:560.7px;font-size:9px;line-height:12.6px;color:#3d3d3d;letter-spacing:0.34px;">Активно</span>
<span class="t" style="left:1112.1px;top:560.7px;font-size:9px;line-height:12.6px;color:#5080b1;letter-spacing:0.24px;">Отменить опоздание</span>
<span class="t" style="left:167.5px;top:583.7px;font-size:9px;line-height:12.6px;color:#5080b1;letter-spacing:0.26px;">Кристиной Алексей</span>
<span class="t" style="left:329.7px;top:583.7px;font-size:9px;line-height:12.6px;color:#3d3d3d;letter-spacing:0.27px;">18 июня 2021 г.</span>
<span class="t" style="left:455.5px;top:583.7px;font-size:9px;line-height:12.6px;color:#3d3d3d;">08:39:30.000000</span>
<span class="t" style="left:657.1px;top:583.7px;font-size:9px;line-height:12.6px;color:#3d3d3d;">00:29:30.000000</span>
<span class="t" style="left:800.8px;top:583.7px;font-size:9px;line-height:12.6px;color:#3d3d3d;letter-spacing:0.26px;">Изменение рабочего графика</span>
<span class="t" style="left:1027.0px;top:583.7px;font-size:9px;line-height:12.6px;color:#3d3d3d;letter-spacing:0.34px;">Активно</span>
<span class="t" style="left:1112.1px;top:583.7px;font-size:9px;line-height:12.6px;color:#5080b1;letter-spacing:0.24px;">Отменить опоздание</span>
</div>
</div>
<div id="edge"></div>
</body>
</html>
